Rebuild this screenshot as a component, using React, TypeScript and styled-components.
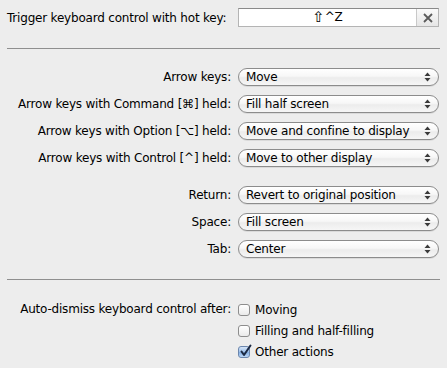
import React from "react";
import styled, { createGlobalStyle } from "styled-components";

const Global = createGlobalStyle`
  html, body { margin: 0; padding: 0; background: #ededed; }
  body {
    font-family: "DejaVu Sans", "Liberation Sans", sans-serif;
    font-size: 12px;
    letter-spacing: -0.2px;
    color: #000;
  }
`;

const Page = styled.div`
  width: 447px;
  height: 368px;
  box-sizing: border-box;
  padding: 8px 8px 0 7px;
  background: #ededed;
  display: flex;
  flex-direction: column;
`;

const Row = styled.div<{ $h?: number }>`
  display: grid;
  grid-template-columns: 224px 201px;
  column-gap: 7px;
  align-items: center;
  height: ${(p) => p.$h ?? 18}px;
`;

const Label = styled.div<{ $left?: boolean }>`
  text-align: ${(p) => (p.$left ? "left" : "right")};
  white-space: nowrap;
`;

const Group = styled.div<{ $gap: number; $top: number }>`
  display: flex;
  flex-direction: column;
  gap: ${(p) => p.$gap}px;
  margin-top: ${(p) => p.$top}px;
`;

const Separator = styled.div<{ $top: number }>`
  height: 1px;
  width: 433px;
  background: #8f8f8f;
  margin-top: ${(p) => p.$top}px;
`;

const HotField = styled.div`
  display: flex;
  height: 19px;
  box-sizing: border-box;
  border: 1px solid #b4b4b4;
  border-top-color: #8a8a8a;
  background: #fff;
`;

const HotText = styled.div`
  flex: 1;
  display: flex;
  align-items: center;
  justify-content: center;
  line-height: 17px;
`;

const ShiftGlyph = styled.span`
  font-size: 15px;
  line-height: 17px;
`;

const ClearButton = styled.div`
  width: 21px;
  border-left: 1px solid #c9c9c9;
  background: linear-gradient(#fafafa, #e6e6e6);
  display: flex;
  align-items: center;
  justify-content: center;
`;

const Popup = styled.div`
  position: relative;
  height: 18px;
  box-sizing: border-box;
  border: 1px solid #8c8c8c;
  border-radius: 9px;
  background: linear-gradient(#ffffff 0%, #f7f7f7 45%, #ececec 55%, #f6f6f6 100%);
  box-shadow: 0 1px 0 rgba(0, 0, 0, 0.08);
  padding-left: 7px;
  line-height: 16px;
  white-space: nowrap;
`;

const Arrows = styled.svg`
  position: absolute;
  right: 7px;
  top: 3px;
`;

const CheckRow = styled.label`
  display: flex;
  align-items: center;
  gap: 5px;
  height: 21px;
`;

const Box = styled.span<{ $checked?: boolean }>`
  position: relative;
  width: 12px;
  height: 12px;
  box-sizing: border-box;
  border: 1px solid ${(p) => (p.$checked ? "#6b86ad" : "#8d8d8d")};
  border-radius: 3px;
  background: ${(p) =>
    p.$checked
      ? "linear-gradient(#d4e4f7, #9fc1ea 50%, #86b0e4 55%, #bcd7f5)"
      : "linear-gradient(#ffffff, #eaeaea)"};
  flex: none;
`;

const CheckMark = styled.svg`
  position: absolute;
  left: 0px;
  top: -3px;
`;

const CheckCol = styled.div`
  display: flex;
  flex-direction: column;
`;

const CheckGrid = styled.div`
  display: grid;
  grid-template-columns: 224px 201px;
  column-gap: 7px;
  margin-top: 19px;
`;

const CheckLabel = styled.div`
  text-align: right;
  height: 21px;
  line-height: 21px;
  white-space: nowrap;
`;

function Select({ value }: { value: string }) {
  return (
    <Popup>
      {value}
      <Arrows width="7" height="10" viewBox="0 0 7 10">
        <path d="M3.5 0.5 L6.5 4 L0.5 4 Z" fill="#3a3a3a" />
        <path d="M3.5 9.5 L6.5 6 L0.5 6 Z" fill="#3a3a3a" />
      </Arrows>
    </Popup>
  );
}

function Check({ checked, children }: { checked?: boolean; children: React.ReactNode }) {
  return (
    <CheckRow>
      <Box $checked={checked}>
        {checked && (
          <CheckMark width="13" height="13" viewBox="0 0 13 13">
            <path
              d="M2.5 7.5 L5 11 L11.5 1.5"
              fill="none"
              stroke="#1c2a44"
              strokeWidth="2"
              strokeLinecap="round"
              strokeLinejoin="round"
            />
          </CheckMark>
        )}
      </Box>
      {children}
    </CheckRow>
  );
}

const arrowRows = [
  ["Arrow keys:", "Move"],
  ["Arrow keys with Command [\u2318] held:", "Fill half screen"],
  ["Arrow keys with Option [\u2325] held:", "Move and confine to display"],
  ["Arrow keys with Control [^] held:", "Move to other display"],
];

const keyRows = [
  ["Return:", "Revert to original position"],
  ["Space:", "Fill screen"],
  ["Tab:", "Center"],
];

export default function App() {
  return (
    <>
      <Global />
      <Page>
        <Row $h={19}>
          <Label $left>Trigger keyboard control with hot key:</Label>
          <HotField>
            <HotText>
              <ShiftGlyph>{"\u21E7"}</ShiftGlyph>
              {"^Z"}
            </HotText>
            <ClearButton>
              <svg width="10" height="10" viewBox="0 0 10 10">
                <path d="M1 1 L9 9 M9 1 L1 9" stroke="#5a5a5a" strokeWidth="1.8" />
              </svg>
            </ClearButton>
          </HotField>
        </Row>
        <Separator $top={21} />
        <Group $gap={9} $top={19}>
          {arrowRows.map(([l, v]) => (
            <Row key={l}>
              <Label>{l}</Label>
              <Select value={v} />
            </Row>
          ))}
        </Group>
        <Group $gap={9} $top={19}>
          {keyRows.map(([l, v]) => (
            <Row key={l}>
              <Label>{l}</Label>
              <Select value={v} />
            </Row>
          ))}
        </Group>
        <Separator $top={21} />
        <CheckGrid>
          <CheckLabel>Auto-dismiss keyboard control after:</CheckLabel>
          <CheckCol>
            <Check>Moving</Check>
            <Check>Filling and half-filling</Check>
            <Check checked>Other actions</Check>
          </CheckCol>
        </CheckGrid>
      </Page>
    </>
  );
}
